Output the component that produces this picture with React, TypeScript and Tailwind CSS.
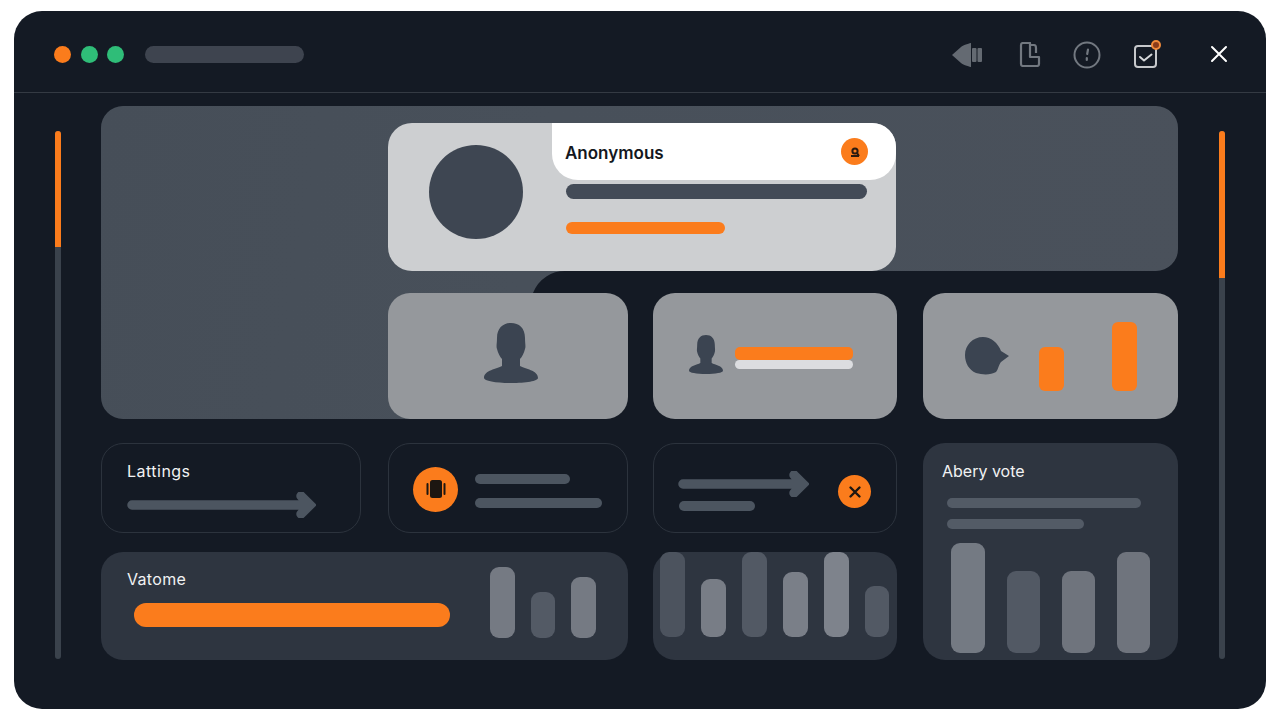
const personPath =
  "M27 0C35 0 41 5 41 15C41 20 42 24 41 26C40 30 38 34 36 36V43C41 46 54 47 54 55C54 58 42 60 27 60C12 60 0 58 0 55C0 47 13 46 18 43V36C16 34 14 30 13 26C12 24 13 20 13 15C13 5 19 0 27 0Z"

function Arrow({ width }: { width: number }) {
  return (
    <svg width={width} height="26" viewBox={`0 0 ${width} 26`} fill="none" className="block">
      <path
        d={`M5 13H${width - 6}M${width - 15} 4L${width - 6} 13L${width - 15} 22`}
        stroke="#4c5560"
        strokeWidth="9.5"
        strokeLinecap="round"
        strokeLinejoin="miter"
      />
    </svg>
  )
}

function Bar({ w, h, color }: { w: string; h: string; color: string }) {
  return <div className={`${w} ${h} ${color} rounded-[9px]`} />
}

export default function App() {
  return (
    <div className="h-[720px] w-[1280px] overflow-hidden bg-white pt-[11px] pl-[14px] font-['Inter',sans-serif]">
      <div className="flex h-[698px] w-[1252px] flex-col rounded-[28px] bg-[#141a24]">
        {/* title bar */}
        <header className="flex h-[82px] shrink-0 items-center border-b border-[#343a43] pt-[6px] pl-[40px]">
          <span className="h-[17px] w-[17px] rounded-full bg-[#fb7c1c]" />
          <span className="ml-[10px] h-[17px] w-[17px] rounded-full bg-[#2fbd78]" />
          <span className="ml-[9px] h-[17px] w-[17px] rounded-full bg-[#2fbd78]" />
          <span className="ml-[21px] h-[17px] w-[159px] rounded-full bg-[#3e444f]" />

          <svg width="30" height="24" viewBox="0 0 30 24" className="ml-[648px]" fill="#646a72">
            <path d="M0 12L9 4C11 2 19 0 19 0V24C19 24 11 22 9 20Z" />
            <rect x="20" y="5" width="4.5" height="14" rx="1" />
            <rect x="25.5" y="5" width="4.5" height="14" rx="1" />
          </svg>
          <svg width="22" height="25" viewBox="0 0 22 25" fill="none" className="ml-[37px]" stroke="#727880" strokeWidth="2.200" strokeLinejoin="round">
            <path d="M2 3C2 2 2.500 1 4 1H11V15H20V22C20 23 19.500 24 18 24H4C2.500 24 2 23 2 22Z" />
            <path d="M11 3H15C16.500 3 17 4 17 6V11" />
          </svg>
          <svg width="28" height="28" viewBox="0 0 28 28" fill="none" className="ml-[32px]" stroke="#727880">
            <circle cx="14" cy="14" r="12.500" strokeWidth="2" />
            <path d="M15 8.500L14.200 13" strokeWidth="2.200" strokeLinecap="round" />
            <path d="M13.800 17V19" strokeWidth="2.200" strokeLinecap="round" />
          </svg>
          <svg width="30" height="30" viewBox="0 0 30 30" fill="none" className="ml-[33px]">
            <rect x="1" y="6" width="21" height="21" rx="3" stroke="#c6c8cb" strokeWidth="2" />
            <path d="M6 17L10 20.500L17.500 14.500" stroke="#d6d8da" strokeWidth="2" strokeLinecap="round" strokeLinejoin="round" />
            <circle cx="22" cy="5" r="4" fill="#8a3b1a" stroke="#f08a3a" strokeWidth="2" />
          </svg>
          <svg width="18" height="18" viewBox="0 0 18 18" fill="none" className="mb-[2px] ml-[46px]" stroke="#ffffff" strokeWidth="2" strokeLinecap="round">
            <path d="M2 2L16 16M16 2L2 16" />
          </svg>
        </header>

        <div className="flex pt-[13px] pl-[41px]">
          {/* left scroll track */}
          <div className="mt-[25px] flex h-[528px] w-[6px] flex-col overflow-hidden rounded-full bg-[#3a424c]">
            <div className="h-[116px] bg-[#fb7c1c]" />
          </div>

          {/* dashboard grid */}
          <main className="isolate ml-[40px] grid w-[1077px] grid-cols-[260px_27px_240px_25px_244px_26px_255px] grid-rows-[165px_22px_126px_24px_90px_19px_108px]">
            <div className="col-start-1 col-end-8 row-start-1 row-end-4 -z-10 bg-[linear-gradient(100deg,#464e58_0%,#48505a_40%,#4a515b_100%)] [clip-path:path('M22_0H1055A22_22_0_0_1_1077_22V143A22_22_0_0_1_1055_165H466A34_34_0_0_0_432_187H320V313H22A22_22_0_0_1_0_291V22A22_22_0_0_1_22_0Z')]" />

            {/* profile card */}
            <section className="col-start-3 col-end-6 row-start-1 mt-[17px] mr-[1px] flex rounded-[24px] bg-[#cdcfd1]">
              <div className="mt-[22px] ml-[41px] h-[94px] w-[94px] rounded-full bg-[#3e4652]" />
              <div className="ml-[29px] flex-1">
                <div className="flex h-[57px] items-center justify-between rounded-tr-[24px] rounded-b-[26px] bg-white pr-[28px] pl-[13px]">
                  <span className="mt-[3px] text-[17px] leading-none font-semibold text-[#14171d]">Anonymous</span>
                  <span className="flex h-[27px] w-[27px] items-center justify-center rounded-full bg-[#fb7c1c]">
                    <svg width="12" height="12" viewBox="0 0 12 12" fill="none" stroke="#2a1a10" strokeWidth="2">
                      <circle cx="6" cy="5" r="2.600" />
                      <path d="M2 10H10M8 7L10 10" />
                    </svg>
                  </span>
                </div>
                <div className="mt-[4px] ml-[14px] h-[15px] w-[301px] rounded-full bg-[#434b57]" />
                <div className="mt-[23px] ml-[14px] h-[12px] w-[159px] rounded-full bg-[#fb7c1c]" />
              </div>
            </section>

            {/* silhouette cards */}
            <section className="col-start-3 row-start-3 flex items-center justify-center rounded-[22px] bg-[#95989c]">
              <svg width="54" height="60" viewBox="0 0 54 60" className="mb-[6px] ml-[6px]" fill="#3b4451">
                <path d={personPath} />
              </svg>
            </section>

            <section className="col-start-5 row-start-3 flex items-center rounded-[22px] bg-[#95989c] pl-[36px]">
              <svg width="34" height="39" viewBox="0 0 54 60" preserveAspectRatio="none" className="mb-[4px]" fill="#3b4451">
                <path d={personPath} />
              </svg>
              <div className="mt-[4px] ml-[12px]">
                <div className="h-[13px] w-[118px] rounded-[5px] bg-[#fb7c1c]" />
                <div className="h-[9px] w-[118px] rounded-[5px] bg-[#dcdde0]" />
              </div>
            </section>

            <section className="col-start-7 row-start-3 flex items-end rounded-[22px] bg-[#95989c] pt-[29px] pb-[28px] pl-[42px]">
              <svg width="44" height="38" viewBox="0 0 44 38" className="mb-[16px]" fill="#3b4451">
                <path d="M18 0C26 0 33 6 36 14L44 19L36 25C34 27 33 33 31 35C26 38 18 38 11 36C4 33 0 26 0 18C0 8 8 0 18 0Z" />
              </svg>
              <div className="ml-[30px] h-[44px] w-[25px] rounded-[6px] bg-[#fb7c1c]" />
              <div className="ml-[48px] h-[69px] w-[25px] rounded-[6px] bg-[#fb7c1c]" />
            </section>

            {/* settings row */}
            <section className="col-start-1 row-start-5 rounded-[22px] border border-[#2c333d] pt-[17px] pl-[25px]">
              <p className="text-[16px] leading-[20px] tracking-[0.03em] text-[#f1f2f3]">Lattings</p>
              <div className="mt-[11px]">
                <Arrow width={189} />
              </div>
            </section>

            <section className="col-start-3 row-start-5 flex items-center rounded-[22px] border border-[#2c333d] pl-[24px]">
              <span className="mt-[2px] flex h-[45px] w-[45px] items-center justify-center rounded-full bg-[#fb7c1c]">
                <svg width="22" height="22" viewBox="0 0 22 22" fill="#1c1611">
                  <rect x="5" y="2" width="12" height="18" rx="2.500" />
                  <rect x="1.500" y="5" width="2" height="12" rx="1" />
                  <rect x="18.500" y="5" width="2" height="12" rx="1" />
                </svg>
              </span>
              <div className="mt-[6px] ml-[17px]">
                <div className="h-[10px] w-[95px] rounded-full bg-[#4c5560]" />
                <div className="mt-[14px] h-[10px] w-[127px] rounded-full bg-[#4c5560]" />
              </div>
            </section>

            <section className="col-start-5 row-start-5 flex items-center rounded-[22px] border border-[#2c333d] pl-[24px]">
              <div className="mt-[6px]">
                <Arrow width={131} />
                <div className="mt-[4px] ml-[1px] h-[10px] w-[76px] rounded-full bg-[#4c5560]" />
              </div>
              <span className="mt-[7px] ml-[29px] flex h-[33px] w-[33px] items-center justify-center rounded-full bg-[#fb7c1c]">
                <svg width="14" height="14" viewBox="0 0 14 14" fill="none" stroke="#1c1611" strokeWidth="2.400" strokeLinecap="round">
                  <path d="M2.500 2.500L11.500 11.500M11.500 2.500L2.500 11.500" />
                </svg>
              </span>
            </section>

            {/* vote panel */}
            <section className="col-start-7 row-start-5 row-end-8 rounded-[22px] bg-[#2e3540] pt-[18px] pl-[19px]">
              <p className="text-[16px] leading-[20px] text-[#f1f2f3]">Abery vote</p>
              <div className="mt-[17px] ml-[5px] h-[10px] w-[194px] rounded-full bg-[#535b66]" />
              <div className="mt-[11px] ml-[5px] h-[10px] w-[137px] rounded-full bg-[#535b66]" />
              <div className="mt-[14px] ml-[9px] flex h-[110px] items-end gap-[22px]">
                <Bar w="w-[34px]" h="h-[110px]" color="bg-[#747a83]" />
                <Bar w="w-[33px]" h="h-[82px]" color="bg-[#525964]" />
                <Bar w="w-[33px]" h="h-[82px]" color="bg-[#6f747d]" />
                <Bar w="w-[33px]" h="h-[101px]" color="bg-[#6f747d]" />
              </div>
            </section>

            {/* volume panel */}
            <section className="col-start-1 col-end-4 row-start-7 flex rounded-[22px] bg-[#2e3540] pl-[26px]">
              <div className="w-[363px]">
                <p className="mt-[17px] text-[16px] leading-[20px] tracking-[0.02em] text-[#f1f2f3]">Vatome</p>
                <div className="mt-[14px] ml-[7px] h-[24px] w-[316px] rounded-full bg-[#fb7c1c]" />
              </div>
              <div className="mt-[15px] flex h-[71px] items-end gap-[16px]">
                <Bar w="w-[25px]" h="h-[71px]" color="bg-[#757a83]" />
                <Bar w="w-[24px]" h="h-[46px]" color="bg-[#535a65]" />
                <Bar w="w-[25px]" h="h-[61px]" color="bg-[#757a83]" />
              </div>
            </section>

            <section className="col-start-5 row-start-7 flex h-[108px] items-start gap-[16px] rounded-[22px] bg-[#2e3540] pl-[7px]">
              <div className="flex h-[85px] items-end gap-[16px]">
                <Bar w="w-[25px]" h="h-[85px]" color="bg-[#4c535e]" />
                <Bar w="w-[25px]" h="h-[58px]" color="bg-[#787d86]" />
                <Bar w="w-[25px]" h="h-[85px]" color="bg-[#525964]" />
                <Bar w="w-[25px]" h="h-[65px]" color="bg-[#7a7f88]" />
                <Bar w="w-[25px]" h="h-[85px]" color="bg-[#7e838c]" />
                <Bar w="w-[24px]" h="h-[51px]" color="bg-[#525964]" />
              </div>
            </section>
          </main>

          {/* right scroll track */}
          <div className="mt-[25px] ml-[41px] flex h-[528px] w-[6px] flex-col overflow-hidden rounded-full bg-[#3a424c]">
            <div className="h-[147px] bg-[#fb7c1c]" />
          </div>
        </div>
      </div>
    </div>
  )
}
